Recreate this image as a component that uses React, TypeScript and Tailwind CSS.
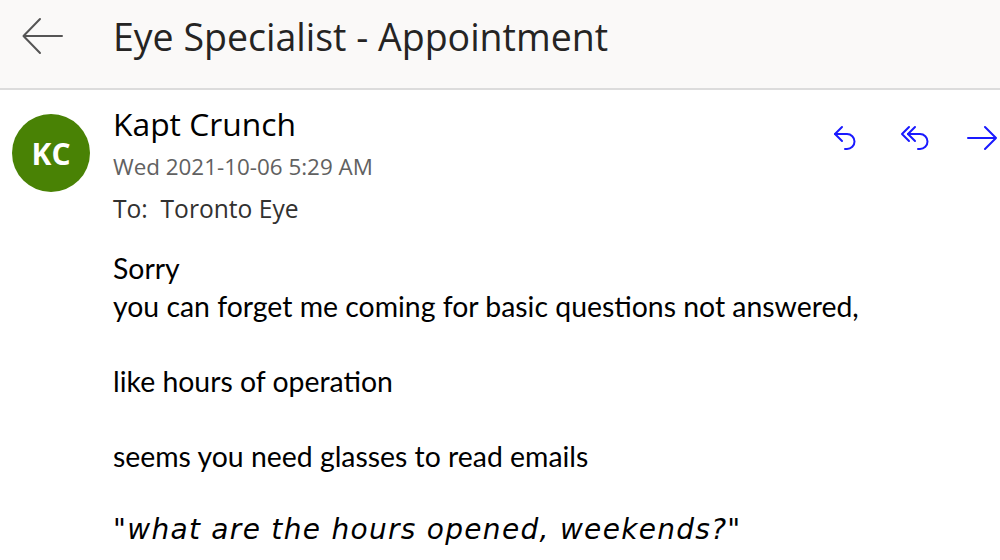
import React from "react";

function BackArrow() {
  return (
    <svg width="42" height="38" viewBox="0 0 42 38" fill="none" stroke="#555" strokeWidth="2" strokeLinecap="round" strokeLinejoin="round">
      <path d="M40 19H2M18 2L1.5 19L18 36" />
    </svg>
  );
}

function ReplyIcon() {
  return (
    <svg width="24" height="26" viewBox="0 0 24 26" fill="none" stroke="#1a1aff" strokeWidth="2" strokeLinecap="round" strokeLinejoin="round">
      <path d="M9 2L2 9L9 16" />
      <path d="M2 9H14a7.5 7.5 0 0 1 0 15h-2" />
    </svg>
  );
}

function ReplyAllIcon() {
  return (
    <svg width="30" height="26" viewBox="0 0 30 26" fill="none" stroke="#1a1aff" strokeWidth="2" strokeLinecap="round" strokeLinejoin="round">
      <path d="M9 2L2 9L9 16" />
      <path d="M15 2L8 9L15 16" />
      <path d="M8 9H20a7.5 7.5 0 0 1 0 15h-2" />
    </svg>
  );
}

function ForwardIcon() {
  return (
    <svg width="30" height="26" viewBox="0 0 30 26" fill="none" stroke="#1a1aff" strokeWidth="2" strokeLinecap="round" strokeLinejoin="round">
      <path d="M1 13H29M18 2L29 13L18 24" />
    </svg>
  );
}

export default function App() {
  return (
    <div className="w-[1000px] h-[560px] overflow-hidden bg-white">
      <div className="h-[90px] bg-[#faf9f8] border-b-2 border-[#dcdcdc] flex items-center">
        <div className="pl-[22px] w-[113px] flex items-center pb-[16px]">
          <BackArrow />
        </div>
        <div className="text-[37.5px] font-medium text-[#252423] font-['Open_Sans',sans-serif] leading-none pb-[14px]">
          Eye Specialist - Appointment
        </div>
      </div>
      <div className="flex pt-[16px]">
        <div className="pl-[12px] w-[113px] pt-[8px]">
          <div className="w-[78px] h-[78px] rounded-full bg-[#498205] flex items-center justify-center text-white text-[30px] font-bold font-['Open_Sans',sans-serif]">
            KC
          </div>
        </div>
        <div className="flex-1 flex flex-col">
          <div className="flex justify-between">
            <div className="flex flex-col font-['Open_Sans',sans-serif]">
              <div className="text-[31.8px] text-black leading-[36px]">Kapt Crunch</div>
              <div className="text-[22.4px] text-[#616161] leading-[28px] mt-[11px]">Wed 2021-10-06 5:29 AM</div>
              <div className="text-[24.6px] text-[#323130] leading-[30px] mt-[13px]">To:&nbsp; Toronto Eye</div>
            </div>
            <div className="flex items-start pt-[19px] pr-[3px]">
              <ReplyIcon />
              <div className="w-[43px]" />
              <ReplyAllIcon />
              <div className="w-[37px]" />
              <ForwardIcon />
            </div>
          </div>
          <div className="mt-[26px] font-['Lato',sans-serif] text-[28.4px] leading-[37.5px] text-black">
            <div>Sorry</div>
            <div>you can forget me coming for basic questions not answered,</div>
            <div>&nbsp;</div>
            <div>like hours of operation</div>
            <div>&nbsp;</div>
            <div>seems you need glasses to read emails</div>
            <div>&nbsp;</div>
            <div className="italic font-['DejaVu_Sans',sans-serif] text-[28px] tracking-[1.3px] leading-[34px]">"what are the hours opened, weekends?"</div>
          </div>
        </div>
      </div>
    </div>
  );
}
